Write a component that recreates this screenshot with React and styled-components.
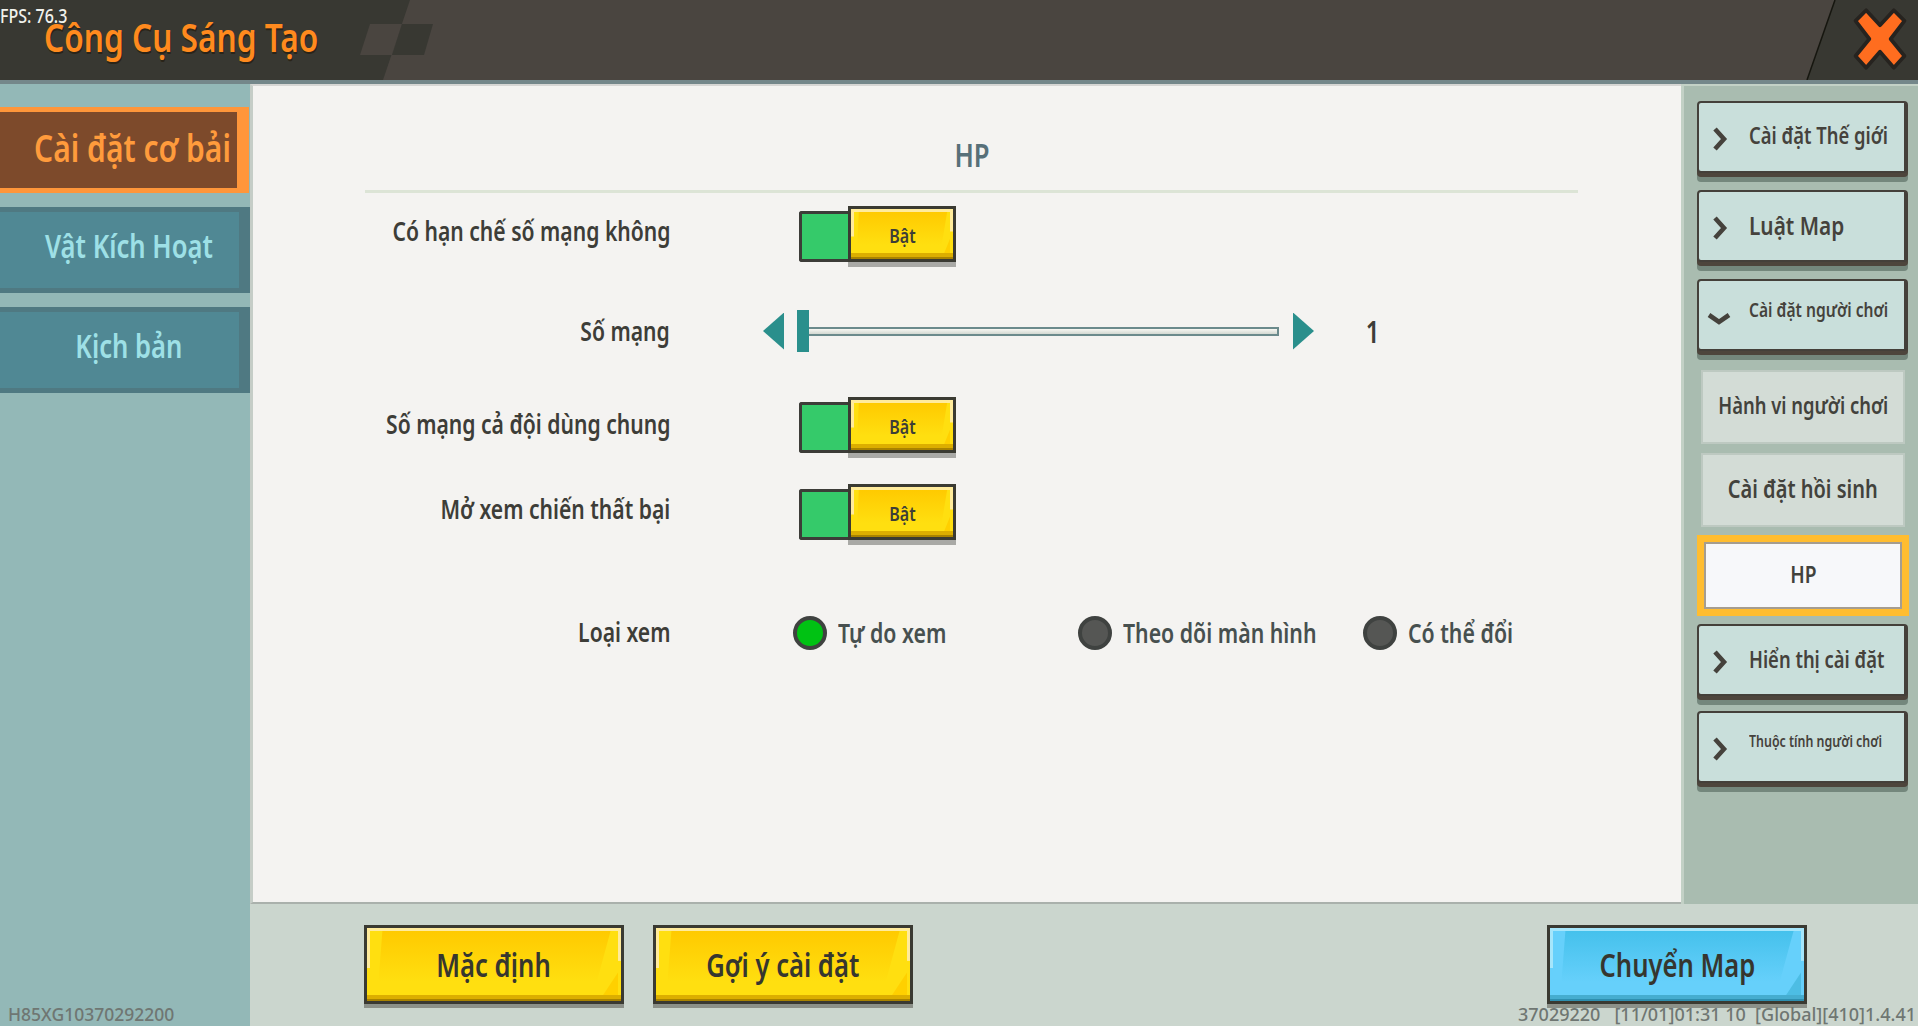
import React from 'react';
import styled, { createGlobalStyle, css } from 'styled-components';

const GlobalStyle = createGlobalStyle`
  html, body {
    margin: 0;
    padding: 0;
    background: #93b8b7;
  }
  * {
    box-sizing: border-box;
  }
  body {
    font-family: 'Noto Sans', 'Open Sans', sans-serif;
  }
`;

function Toggle() {
  return (
    <ToggleWrap>
      <ToggleTrack />
      <ToggleKnob>
        <Txt>Bật</Txt>
      </ToggleKnob>
    </ToggleWrap>
  );
}

function Chevron({ open }) {
  return (
    <ChevronBox $open={open}>
      <svg width='26' height='26' viewBox='0 0 26 26'>
        <polyline
          points={open ? '3,9 13,16 23,9' : '8,3 17,13 8,23'}
          fill='none'
          stroke='#45423c'
          strokeWidth='4.6'
        />
      </svg>
    </ChevronBox>
  );
}

function App() {
  return (
    <Page>
      <GlobalStyle />
      <Header>
        <HeaderArt viewBox='0 0 1918 80' preserveAspectRatio='none'>
          <polygon points='410,0 1835,0 1807,80 383,80' fill='#4a4540' />
          <polygon points='370,24 402,24 392,55 360,55' fill='#4a4540' />
          <polygon points='402,24 433,24 424,55 392,55' fill='#383832' />
          <line x1='1835' y1='0' x2='1807' y2='80' stroke='#16160f' strokeWidth='1.5' />
        </HeaderArt>
        <HeaderTitle>
          <Txt $origin='left'>Công Cụ Sáng Tạo</Txt>
        </HeaderTitle>
        <CloseButton>
          <svg width='56' height='66' viewBox='0 0 52 62'>
            <path
              d='M13 4 L26 18 L39 4 L49 14 L36 31 L49 47 L39 58 L26 43 L13 58 L3 47 L16 31 L3 14 Z'
              fill='#ff6d1f'
              stroke='#26231f'
              strokeWidth='3.5'
              strokeLinejoin='round'
            />
          </svg>
        </CloseButton>
      </Header>
      <Body>
        <LeftNav>
          <NavTab $active>
            <Txt $origin='left'>Cài đặt cơ bải</Txt>
          </NavTab>
          <NavTab>
            <Txt>Vật Kích Hoạt</Txt>
          </NavTab>
          <NavTab>
            <Txt>Kịch bản</Txt>
          </NavTab>
        </LeftNav>
        <Center>
          <Upper>
            <Content>
              <SectionTitle>
                <Txt>HP</Txt>
              </SectionTitle>
              <SettingRow $top={8} $h={66}>
                <RowLabel>
                  <Txt $origin='right'>Có hạn chế số mạng không</Txt>
                </RowLabel>
                <Toggle />
              </SettingRow>
              <SettingRow $top={35} $h={64}>
                <RowLabel>
                  <Txt $origin='right'>Số mạng</Txt>
                </RowLabel>
                <SliderBox>
                  <Arrow $left />
                  <Track>
                    <Thumb />
                  </Track>
                  <Arrow />
                  <SliderValue>
                    <Txt>1</Txt>
                  </SliderValue>
                </SliderBox>
              </SettingRow>
              <SettingRow $top={26} $h={66}>
                <RowLabel $low>
                  <Txt $origin='right'>Số mạng cả đội dùng chung</Txt>
                </RowLabel>
                <Toggle />
              </SettingRow>
              <SettingRow $top={21} $h={66}>
                <RowLabel>
                  <Txt $origin='right'>Mở xem chiến thất bại</Txt>
                </RowLabel>
                <Toggle />
              </SettingRow>
              <SettingRow $top={70} $h={40}>
                <RowLabel>
                  <Txt $origin='right'>Loại xem</Txt>
                </RowLabel>
                <RadioGroup>
                  <RadioItem>
                    <Radio $on />
                    <RadioText>
                      <Txt $origin='left'>Tự do xem</Txt>
                    </RadioText>
                  </RadioItem>
                  <RadioItem>
                    <Radio />
                    <RadioText>
                      <Txt $origin='left'>Theo dõi màn hình</Txt>
                    </RadioText>
                  </RadioItem>
                  <RadioItem>
                    <Radio />
                    <RadioText>
                      <Txt $origin='left'>Có thể đổi</Txt>
                    </RadioText>
                  </RadioItem>
                </RadioGroup>
              </SettingRow>
            </Content>
            <RightNav>
              <GroupButton $size={23} $top={0}>
                <Chevron />
                <Txt $origin='left'>Cài đặt Thế giới</Txt>
              </GroupButton>
              <GroupButton $size={26} $top={17} $drop>
                <Chevron />
                <Txt $origin='left'>Luật Map</Txt>
              </GroupButton>
              <GroupButton $size={19.5} $top={17} $raise>
                <Chevron open />
                <Txt $origin='left'>Cài đặt người chơi</Txt>
              </GroupButton>
              <SubButton $size={23} $top={19}>
                <Txt>Hành vi người chơi</Txt>
              </SubButton>
              <SubButton $size={25} $top={9}>
                <Txt>Cài đặt hồi sinh</Txt>
              </SubButton>
              <SubButton $active $size={24} $top={8}>
                <Txt>HP</Txt>
              </SubButton>
              <GroupButton $size={23} $top={8} $drop>
                <Chevron />
                <Txt $origin='left'>Hiển thị cài đặt</Txt>
              </GroupButton>
              <GroupButton $size={15.5} $top={15} $raise>
                <Chevron />
                <Txt $origin='left'>Thuộc tính người chơi</Txt>
              </GroupButton>
            </RightNav>
          </Upper>
          <Footer>
            <FooterLeft>
              <ActionButton>
                <Txt>Mặc định</Txt>
              </ActionButton>
              <ActionButton>
                <Txt>Gợi ý cài đặt</Txt>
              </ActionButton>
            </FooterLeft>
            <ActionButton $blue>
              <Txt>Chuyển Map</Txt>
            </ActionButton>
          </Footer>
        </Center>
      </Body>
      <Fps>
        <Txt $origin='left'>FPS: 76.3</Txt>
      </Fps>
      <DeviceId>H85XG10370292200</DeviceId>
      <BuildInfo>37029220&nbsp;&nbsp;&nbsp;[11/01]01:31 10&nbsp;&nbsp;[Global][410]1.4.41</BuildInfo>
    </Page>
  );
}

export default App;

// no condensed face is installed, so the game's narrow font is squeezed here
const Txt = styled.span`
  position: relative;
  display: inline-block;
  flex: none;
  white-space: nowrap;
  transform: scaleX(0.8);
  transform-origin: ${(props) => props.$origin || 'center'};
`;

const Page = styled.div`
  position: relative;
  width: 1918px;
  height: 1026px;
  overflow: hidden;
  display: flex;
  flex-direction: column;
  color: #3d3d38;
`;

const Header = styled.header`
  position: relative;
  height: 84px;
  flex: none;
  background: #383832;
  border-bottom: 4px solid #74878a;
  display: flex;
  align-items: center;
  justify-content: space-between;
  padding: 0 10px 0 44px;
`;

const HeaderArt = styled.svg`
  position: absolute;
  left: 0;
  top: 0;
  width: 1918px;
  height: 80px;
`;

const HeaderTitle = styled.h1`
  position: relative;
  margin: 0 0 6px;
  font-size: 39.6px;
  font-weight: 600;
  color: #ff8a1e;
  text-shadow: 1px 2px 0 #2a2418;
`;

const CloseButton = styled.div`
  position: relative;
  display: flex;
  margin-top: -3px;
`;

const Body = styled.div`
  flex: 1;
  display: flex;
  min-height: 0;
`;

const LeftNav = styled.nav`
  width: 250px;
  flex: none;
  padding-top: 23px;
  display: flex;
  flex-direction: column;
  gap: 14px;
  background: #93b8b7;
`;

const NavTab = styled.div`
  height: 86px;
  display: flex;
  align-items: center;
  justify-content: center;
  font-size: 32px;
  font-weight: 600;
  padding: 0 0 10px 19px;
  color: #9ee0e6;
  background: #508894;
  border: 5px solid #4f7982;
  border-left-width: 0;
  border-right-width: 11px;

  ${(props) =>
    props.$active &&
    css`
      color: #ff9b3c;
      background: #7d4a2b;
      border-color: #ff963a;
      border-right-width: 12px;
      margin-right: 1px;
      padding: 0 0 6px 34px;
      justify-content: flex-start;
      font-size: 37.5px;
    `}
`;

const Center = styled.div`
  flex: 1;
  display: flex;
  flex-direction: column;
  min-width: 0;
`;

const Upper = styled.div`
  height: 820px;
  flex: none;
  display: flex;
`;

const Content = styled.main`
  width: 1431px;
  flex: none;
  background: #f4f3f1;
  border-left: 3px solid #c5cdc7;
  border-bottom: 2px solid #aab1ac;
  border-top: 2px solid #d6d6d4;
  padding-left: 112px;
`;

const SectionTitle = styled.h2`
  width: 1213px;
  height: 107px;
  margin: 0;
  padding: 47px 0 0 0;
  text-align: center;
  font-size: 32px;
  line-height: 44px;
  font-weight: 600;
  color: #577079;
  border-bottom: 3px solid #dce4d6;
`;

const SettingRow = styled.div`
  display: flex;
  align-items: center;
  margin-top: ${(props) => props.$top}px;
  height: ${(props) => props.$h}px;
`;

const RowLabel = styled.div`
  width: 305px;
  flex: none;
  display: flex;
  justify-content: flex-end;
  font-size: 26.4px;
  font-weight: 600;
  padding-bottom: ${(props) => (props.$low ? 2 : 6)}px;
`;

const ToggleWrap = styled.div`
  display: flex;
  align-items: flex-end;
  margin-left: 129px;
`;

const ToggleTrack = styled.div`
  width: 49px;
  height: 51px;
  background: #35ca6a;
  border: 3px solid #3c3c38;
  border-right: 0;
  border-radius: 3px 0 0 3px;
`;

// the shiny face shared by the Bật knob and the big footer buttons
const glossFace = css`
  position: relative;
  border: 3px solid #3a3a32;
  background:
    linear-gradient(${(props) => (props.$blue ? '#a6e6fb' : '#ffeb9c')} 0 3px, transparent 3px),
    linear-gradient(to right, ${(props) => (props.$blue ? '#a6e6fb' : '#ffeb9c')} 0 3px, transparent 3px) left top / 100% 55% no-repeat,
    linear-gradient(to left, ${(props) => (props.$blue ? '#a6e6fb' : '#ffeb9c')} 0 3px, transparent 3px) right top / 100% 45% no-repeat,
    linear-gradient(to top, ${(props) => (props.$blue ? '#2e8fb0' : '#a98300')} 0 2px, ${(props) => (props.$blue ? '#45add0' : '#dcae00')} 2px 6px, transparent 6px),
    ${(props) => (props.$blue ? '#66d0fb' : '#ffdf10')};

  &::before {
    content: '';
    position: absolute;
    left: 3px;
    top: 3px;
    right: 3px;
    bottom: 6px;
    clip-path: polygon(5% 0, 97% 0, 90% 100%, 3% 100%);
    background: linear-gradient(
      ${(props) => (props.$blue ? '#45c1ec, #66d0fb 80%' : '#ffca00, #ffdf10 80%')}
    );
  }

  &::after {
    content: '';
    position: absolute;
    left: 3px;
    top: 3px;
    right: 3px;
    bottom: 6px;
    clip-path: polygon(100% 65%, 100% 100%, 94% 100%);
    background: ${(props) => (props.$blue ? '#4dbde4' : '#ffd000')};
  }
`;

const ToggleKnob = styled.div`
  width: 108px;
  height: 56px;
  display: flex;
  align-items: center;
  justify-content: center;
  font-size: 20px;
  font-weight: 600;
  padding-top: 2px;
  box-shadow: 0 5px 0 #a9a9a6;
  ${glossFace}
`;

const SliderBox = styled.div`
  display: flex;
  align-items: center;
  margin-left: 93px;
  padding-bottom: 6px;
`;

const Arrow = styled.div`
  width: 21px;
  height: 37px;
  background: #2a8f8c;
  clip-path: ${(props) =>
    props.$left ? 'polygon(100% 0, 100% 100%, 0 50%)' : 'polygon(0 0, 100% 50%, 0 100%)'};
`;

const Track = styled.div`
  position: relative;
  width: 473px;
  height: 9px;
  margin: 0 14px 0 22px;
  background: linear-gradient(#f7f7f2, #d3d8d2);
  border: 2px solid #6b8a8c;
`;

const Thumb = styled.div`
  position: absolute;
  left: -11px;
  top: -19px;
  width: 12px;
  height: 42px;
  background: #2a8f8c;
`;

const SliderValue = styled.div`
  margin-left: 50px;
  font-size: 30px;
  font-weight: 600;
`;

const RadioGroup = styled.div`
  display: flex;
  margin-left: 123px;
  padding-bottom: 4px;
`;

const RadioItem = styled.div`
  width: 285px;
  display: flex;
  align-items: center;
  gap: 11px;
`;

const Radio = styled.div`
  width: 34px;
  height: 34px;
  flex: none;
  border-radius: 50%;
  border: 4px solid #3f4240;
  background: ${(props) => (props.$on ? '#00c213' : '#555654')};
`;

const RadioText = styled.div`
  font-size: 26.6px;
  font-weight: 600;
  color: #47504f;
`;

const RightNav = styled.aside`
  flex: none;
  width: 237px;
  background: #a9bcb0;
  border-left: 3px solid #c3d1c6;
  border-top: 2px solid #c3d1c6;
  padding: 15px 10px 0 13px;
`;

const GroupButton = styled.div`
  position: relative;
  width: 211px;
  height: 72px;
  margin-top: ${(props) => props.$top}px;
  display: flex;
  align-items: center;
  font-size: ${(props) => props.$size}px;
  font-weight: 600;
  color: #45423c;
  padding: 0 0 ${(props) => (props.$raise ? 12 : props.$drop ? 2 : 4)}px 50px;
  background: #c9dfdb;
  border: 2px solid #44403a;
  border-width: 2px 4px 2px 2px;
  border-radius: 4px;
  box-shadow:
    0 4px 0 #4d453c,
    0 9px 0 #74877c;
`;

const ChevronBox = styled.span`
  position: absolute;
  left: ${(props) => (props.$open ? '7px' : '8px')};
  top: ${(props) => (props.$open ? '25px' : '23px')};
  display: flex;
`;

const SubButton = styled.div`
  width: 204px;
  height: 74px;
  margin: ${(props) => props.$top}px 0 0 4px;
  display: flex;
  align-items: center;
  justify-content: center;
  font-size: ${(props) => props.$size}px;
  font-weight: 600;
  padding-bottom: 4px;
  color: #42423c;
  background: #d3dcd6;
  border: 2px solid #bdc9c1;

  ${(props) =>
    props.$active &&
    css`
      width: 212px;
      height: 81px;
      margin-left: 0;
      background: #f7f8fa;
      border: 7px solid #ffbd30;
      outline: 2px solid #a59d90;
      outline-offset: -9px;
    `}
`;

const Footer = styled.footer`
  flex: 1;
  background: #cbd6ce;
  display: flex;
  justify-content: space-between;
  padding: 21px 111px 0 114px;
`;

const FooterLeft = styled.div`
  display: flex;
  gap: 29px;
`;

const ActionButton = styled.div`
  width: 260px;
  height: 79px;
  display: flex;
  align-items: center;
  justify-content: center;
  font-size: 32px;
  font-weight: 600;
  color: #36362f;
  box-shadow: 0 4px 0 #8c9189;
  ${glossFace}
`;

const Fps = styled.div`
  position: absolute;
  left: 0;
  top: 2px;
  font-size: 20px;
  font-weight: 500;
  color: #f1f1ec;
`;

const DeviceId = styled.div`
  position: absolute;
  left: 8px;
  bottom: 0;
  font-size: 17.5px;
  font-weight: 500;
  color: #6f7672;
`;

const BuildInfo = styled.div`
  position: absolute;
  right: 2px;
  bottom: 0;
  font-size: 18px;
  font-weight: 500;
  color: #6f7672;
`;
